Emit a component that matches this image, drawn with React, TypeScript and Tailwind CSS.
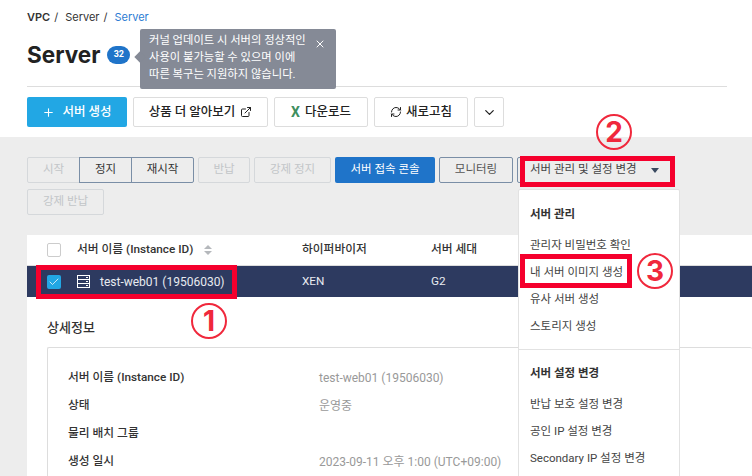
import React from 'react';
import { Plus, ExternalLink, RefreshCw, ChevronDown, X, Check } from 'lucide-react';

const font = "font-['Roboto','Noto_Sans_CJK_KR',sans-serif]";

const ActionBtn = ({ label, kind, className }: { label: string; kind: 'off' | 'on' | 'line'; className: string }) => {
  const styles = {
    off: 'border-[#d5d8db] text-[#c2c5c8]',
    on: 'border-[#7a8ea6] text-[#333]',
    line: 'border-[#7a8ea6] text-[#555]',
  }[kind];
  return (
    <button className={`h-[26px] border rounded-[2px] text-[11.5px] flex items-center justify-center shrink-0 ${styles} ${className}`}>
      {label}
    </button>
  );
};

const ServerIcon = () => (
  <svg width="13" height="13" viewBox="0 0 13 13" fill="none" stroke="#fff" strokeWidth="1">
    <rect x="0.5" y="0.5" width="12" height="12" />
    <path d="M0.5 4.5h12M0.5 8.5h12" />
    <path d="M9 2.5h2M9 6.5h2M9 10.5h2" />
  </svg>
);

const Circled = ({ n, className }: { n: string; className: string }) => (
  <div className={`absolute w-[36px] h-[36px] rounded-full border-2 border-[#f0283c] text-[#f0283c] text-[28px] font-bold flex items-center justify-center font-['Inter',sans-serif] ${className}`}>
    {n}
  </div>
);

const menuGroupA = ['관리자 비밀번호 확인', '내 서버 이미지 생성', '유사 서버 생성', '스토리지 생성'];
const menuGroupB = ['반납 보호 설정 변경', '공인 IP 설정 변경', 'Secondary IP 설정 변경'];

const details = [
  ['서버 이름 (Instance ID)', 'test-web01 (19506030)'],
  ['상태', '운영중'],
  ['물리 배치 그룹', ''],
  ['생성 일시', '2023-09-11 오후 1:00 (UTC+09:00)'],
];

export default function App() {
  return (
    <div className={`relative w-[752px] h-[476px] overflow-hidden bg-[#ededed] ${font}`}>
      {/* header */}
      <div className="bg-white h-[137px] pl-[27px] pr-[25px] pt-[10px]">
        <div className="flex gap-[4px] text-[11px] leading-[14px] font-['Inter','Noto_Sans_CJK_KR',sans-serif] text-[#333]">
          <span className="font-semibold">VPC</span>
          <span>/</span>
          <span className="ml-[3px]">Server</span>
          <span>/</span>
          <span className="ml-[3px] text-[#2b7cd3]">Server</span>
        </div>
        <div className="flex items-center gap-[7px] h-[38px] mt-[12px]">
          <h1 className="text-[22.5px] font-bold text-[#222] font-['Inter',sans-serif] leading-[38px]">Server</h1>
          <span className="w-[23px] h-[18px] rounded-full bg-[#1f74c9] text-white text-[9px] font-bold flex items-center justify-center">32</span>
        </div>
        <div className="mt-[12px] border-t border-[#ddd]" />
        <div className="flex gap-[6px] mt-[10px]">
          <button className="w-[100px] h-[30px] bg-[#22a7e4] text-white rounded-[2px] text-[12.5px] font-medium flex items-center justify-center gap-[7px]">
            <Plus size={13} strokeWidth={2} /> 서버 생성
          </button>
          <button className="w-[135px] h-[30px] border border-[#ddd] rounded-[2px] text-[12.5px] font-medium text-[#222] flex items-center justify-center gap-[5px]">
            상품 더 알아보기 <ExternalLink size={12} />
          </button>
          <button className="w-[94px] h-[30px] border border-[#ddd] rounded-[2px] text-[12.5px] font-medium text-[#222] flex items-center justify-center gap-[5px]">
            <span className="text-[#3f8f5f] font-bold text-[14px]">X</span> 다운로드
          </button>
          <button className="w-[94px] h-[30px] border border-[#ddd] rounded-[2px] text-[12.5px] font-medium text-[#222] flex items-center justify-center gap-[4px]">
            <RefreshCw size={12} /> 새로고침
          </button>
          <button className="w-[30px] h-[30px] border border-[#ddd] rounded-[2px] text-[#222] flex items-center justify-center">
            <ChevronDown size={15} />
          </button>
        </div>
      </div>

      {/* actions */}
      <div className="pl-[27px] pt-[20px] h-[98px]">
        <div className="flex">
          <ActionBtn label="시작" kind="off" className="w-[53px] rounded-r-none" />
          <ActionBtn label="정지" kind="on" className="w-[53px] -ml-px rounded-none" />
          <ActionBtn label="재시작" kind="on" className="w-[63px] -ml-px rounded-l-none" />
          <ActionBtn label="반납" kind="off" className="w-[52px] ml-[4px]" />
          <ActionBtn label="강제 정지" kind="off" className="w-[77px] ml-[4px]" />
          <button className="w-[100px] h-[26px] ml-[4px] bg-[#1f74c9] text-white rounded-[2px] text-[11.5px] shrink-0">서버 접속 콘솔</button>
          <ActionBtn label="모니터링" kind="line" className="w-[74px] ml-[4px]" />
          <button className="w-[155px] h-[26px] ml-[4px] border border-[#7a8ea6] rounded-[2px] text-[11.5px] text-[#444] flex items-center pl-[12px] gap-[14px] shrink-0">
            서버 관리 및 설정 변경
            <span className="w-0 h-0 border-x-[4px] border-x-transparent border-t-[5px] border-t-[#3a4a60]" />
          </button>
        </div>
        <ActionBtn label="강제 반납" kind="off" className="w-[77px] mt-[6px]" />
      </div>

      {/* table panel */}
      <div className="ml-[27px] h-[241px] bg-white text-[11.75px]">
        <div className="h-[31px] flex items-center font-medium text-[#333] border-b border-[#ddd]">
          <div className="w-[50px] pl-[20px] shrink-0">
            <span className="block w-[14px] h-[14px] border border-[#ccc] rounded-[2px] bg-white" />
          </div>
          <div className="w-[225px] shrink-0 flex items-center gap-[11px]">
            서버 이름 (Instance ID)
            <span className="flex flex-col gap-[2px]">
              <span className="w-0 h-0 border-x-[4px] border-x-transparent border-b-[4px] border-b-[#b5b8bc]" />
              <span className="w-0 h-0 border-x-[4px] border-x-transparent border-t-[4px] border-t-[#b5b8bc]" />
            </span>
          </div>
          <div className="w-[129px] shrink-0">하이퍼바이저</div>
          <div>서버 세대</div>
        </div>
        <div className="h-[31px] bg-[#2d3a60] text-[#e8eaf0] flex items-center">
          <div className="w-[50px] pl-[20px] shrink-0">
            <span className="w-[14px] h-[14px] bg-[#22a7e4] rounded-[2px] text-white flex items-center justify-center">
              <Check size={12} strokeWidth={1.5} />
            </span>
          </div>
          <div className="w-[225px] shrink-0 flex items-center gap-[10px] text-[12px]">
            <ServerIcon /> test-web01 (19506030)
          </div>
          <div className="w-[129px] shrink-0">XEN</div>
          <div>G2</div>
        </div>
        <div className="pl-[20px] pt-[22px]">
          <h2 className="text-[13px] leading-[18px] font-medium text-[#333]">상세정보</h2>
          <div className="mt-[10px] border border-[#ddd] rounded-[2px] pl-[20px] pt-[16px] h-[140px] border-r-0">
            {details.map(([k, v]) => (
              <div key={k} className="h-[28px] flex items-center">
                <div className="w-[251px] font-medium text-[#333] shrink-0">{k}</div>
                <div className="text-[#999] text-[12px]">{v}</div>
              </div>
            ))}
          </div>
        </div>
      </div>

      {/* tooltip */}
      <div className="absolute left-[140px] top-[29px] w-[196px] h-[60px] bg-[#858a96] rounded-[2px] pl-[9px] pt-[3px] text-white text-[11.3px] leading-[17px]">
        <span className="absolute left-[-4px] top-[24px] w-[8px] h-[8px] bg-[#858a96] rotate-45" />
        <p className="relative">커널 업데이트 시 서버의 정상적인<br />사용이 불가능할 수 있으며 이에<br />따른 복구는 지원하지 않습니다.</p>
        <X size={12} className="absolute right-[10px] top-[9px]" />
      </div>

      {/* dropdown menu */}
      <div className="absolute left-[518px] top-[189px] w-[162px] h-[300px] bg-white border border-[#e2e2e2] rounded-[2px] text-[11.5px] text-[#444]">
        <div className="h-[160px] border-b border-[#e2e2e2] px-[11px] pt-[15px]">
          <div className="font-semibold text-[#333] leading-[18px] mb-[9px]">서버 관리</div>
          {menuGroupA.map((m) => (
            <div key={m} className="h-[27px] flex items-center">{m}</div>
          ))}
        </div>
        <div className="px-[11px] pt-[14px]">
          <div className="font-semibold text-[#333] leading-[18px] mb-[9px]">서버 설정 변경</div>
          {menuGroupB.map((m) => (
            <div key={m} className="h-[27px] flex items-center">{m}</div>
          ))}
        </div>
      </div>

      {/* callouts */}
      <div className="absolute left-[36px] top-[265px] w-[201px] h-[34px] border-[5px] border-[#f5002d]" />
      <div className="absolute left-[520px] top-[156px] w-[155px] h-[31px] border-[5px] border-[#f5002d]" />
      <div className="absolute left-[520px] top-[254px] w-[112px] h-[34px] border-[5px] border-[#f5002d]" />
      <Circled n="1" className="left-[191px] top-[303px]" />
      <Circled n="2" className="left-[596px] top-[114px]" />
      <Circled n="3" className="left-[637px] top-[253px]" />
    </div>
  );
}
